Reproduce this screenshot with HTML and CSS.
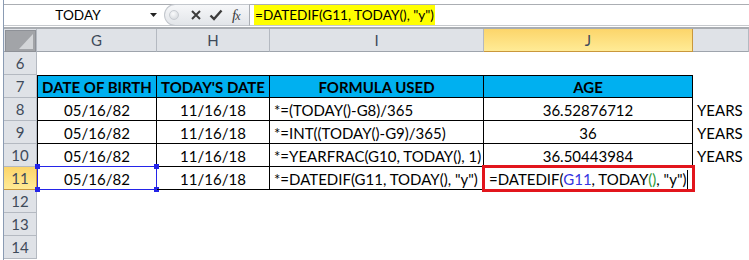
FILE: index.html
```html
<!DOCTYPE html>
<html lang="en">
<head>
    <meta charset="UTF-8">
    <title>DATEDIF</title>
    <link rel="stylesheet" href="styles.css">
</head>
<body>
<div class="app">
    <div class="formula-bar">
        <div class="bar-row">
            <div class="name-box">
                <span class="name">TODAY</span>
                <svg class="drop" width="7" height="4" viewBox="0 0 7 4"><path d="M0 0H7L3.5 4Z" fill="#222"/></svg>
            </div>
            <div class="fx-buttons">
                <span class="knob"></span>
                <svg width="10" height="10" viewBox="0 0 10 10"><path d="M1 1L9 9M9 1L1 9" stroke="#3c3c3c" stroke-width="2"/></svg>
                <svg width="14" height="12" viewBox="0 0 14 12"><path d="M1.5 6.5L5 10L12.5 1.5" stroke="#3c3c3c" stroke-width="2.4" fill="none"/></svg>
                <span class="fx">f<small>x</small></span>
            </div>
            <div class="formula-input">
                <span class="hl">=DATEDIF(G11, TODAY(), "y")</span>
            </div>
        </div>
    </div>

    <div class="sheet">
        <!-- column headings -->
        <div class="hd corner">
            <svg width="31" height="22" viewBox="0 0 31 22"><rect x="0.5" y="0.5" width="30" height="21" fill="#a2a4a8" stroke="#8e9197"/><path d="M28 4V19H14Z" fill="#d3d5d8"/></svg>
        </div>
        <div class="hd">G</div>
        <div class="hd">H</div>
        <div class="hd">I</div>
        <div class="hd active">J</div>
        <div class="hd"></div>

        <!-- row 6 -->
        <div class="rh">6</div>
        <div class="c"></div><div class="c"></div><div class="c"></div><div class="c"></div><div class="c"></div>

        <!-- row 7 -->
        <div class="rh">7</div>
        <div class="c t head first">DATE OF BIRTH</div>
        <div class="c t head">TODAY'S DATE</div>
        <div class="c t head">FORMULA USED</div>
        <div class="c t head">AGE</div>
        <div class="c"></div>

        <!-- row 8 -->
        <div class="rh">8</div>
        <div class="c t first mid">05/16/82</div>
        <div class="c t mid">11/16/18</div>
        <div class="c t">*=(TODAY()-G8)/365</div>
        <div class="c t mid">36.52876712</div>
        <div class="c">YEARS</div>

        <!-- row 9 -->
        <div class="rh">9</div>
        <div class="c t first mid">05/16/82</div>
        <div class="c t mid">11/16/18</div>
        <div class="c t">*=INT((TODAY()-G9)/365)</div>
        <div class="c t mid">36</div>
        <div class="c">YEARS</div>

        <!-- row 10 -->
        <div class="rh">10</div>
        <div class="c t first mid">05/16/82</div>
        <div class="c t mid">11/16/18</div>
        <div class="c t">*=YEARFRAC(G10, TODAY(), 1)</div>
        <div class="c t mid">36.50443984</div>
        <div class="c">YEARS</div>

        <!-- row 11 -->
        <div class="rh active">11</div>
        <div class="c t first mid ref">
            05/16/82
            <span class="sel"></span>
            <span class="grip tl"></span><span class="grip tr"></span>
            <span class="grip bl"></span><span class="grip br"></span>
        </div>
        <div class="c t mid">11/16/18</div>
        <div class="c t">*=DATEDIF(G11, TODAY(), "y")</div>
        <div class="c t editing">=DATEDIF(<span class="blue">G11</span>, TODAY<span class="green">()</span>, "y")<span class="cursor"></span></div>
        <div class="c"></div>

        <div class="rh">12</div>
        <div class="c"></div><div class="c"></div><div class="c"></div><div class="c"></div><div class="c"></div>
        <div class="rh">13</div>
        <div class="c"></div><div class="c"></div><div class="c"></div><div class="c"></div><div class="c"></div>
        <div class="rh">14</div>
        <div class="c"></div><div class="c"></div><div class="c"></div><div class="c"></div><div class="c"></div>
    </div>
</div>
</body>
</html>
```

FILE: styles.css
```css
* {
    box-sizing: border-box;
}
body {
    margin: 0;
    background: #fff;
    font-family: Lato, sans-serif;
    overflow: hidden;
}
.app {
    margin-left: 3px;
    border-left: 1px solid #8a9bb3;
    height: 260px;
}

/* formula bar */
.formula-bar {
    padding-top: 4px;
    padding-bottom: 1px;
    border-bottom: 2px solid #a9adb2;
}
.bar-row {
    display: flex;
    height: 22px;
    border-top: 1px solid #abaeb3;
    border-bottom: 1px solid #c6c9cd;
}
.name-box {
    width: 160px;
    display: flex;
    align-items: center;
    font-size: 13.6px;
    color: #000;
}
.name {
    flex: 1;
    text-align: center;
    padding-left: 2px;
}
.drop {
    margin-right: 7px;
}
.fx-buttons {
    width: 86px;
    display: flex;
    align-items: center;
    gap: 0;
    background: linear-gradient(#f6f7f9, #e2e5e9);
    border: 1px solid #c3c7cd;
    border-right: 1px solid #a9adb3;
    border-radius: 11px 0 0 11px;
    margin-top: -1px;
    margin-bottom: -1px;
}
.knob {
    width: 10px;
    height: 10px;
    border-radius: 50%;
    background: radial-gradient(circle at 40% 35%, #fafbfc, #cfd3d8);
    border: 1px solid #c8ccd1;
    margin-left: 4px;
    margin-right: 12px;
}
.fx-buttons svg + svg {
    margin-left: 8px;
}
.fx {
    margin-left: 9px;
    font-family: "Liberation Serif", serif;
    font-style: italic;
    font-size: 15px;
    color: #3c3c3c;
    letter-spacing: -1px;
}
.fx small {
    font-size: 12px;
}
.formula-input {
    flex: 1;
    padding-left: 4px;
    display: flex;
}
.hl {
    background: #ffff00;
    font-size: 13.6px;
    line-height: 20px;
    padding: 0 1px;
}

/* sheet grid */
.sheet {
    display: grid;
    grid-template-columns: 33px 120px 113px 214px 209px 1fr;
    grid-auto-rows: 23px;
    font-size: 15px;
}
.hd,
.rh {
    background: #dfe2e7;
    color: #3e4a5a;
    border-right: 1px solid #b4b9c1;
    border-bottom: 1px solid #b4b9c1;
    text-align: center;
    line-height: 23px;
    font-size: 15px;
}
.hd {
    border-bottom-color: #9ea4ac;
}
.hd.corner {
    padding: 1px 0 0 1px;
    line-height: 0;
    text-align: left;
}
.hd.active,
.rh.active {
    background: linear-gradient(#fcd56a, #ffeb96);
    border-color: #c9973c;
}
.c {
    position: relative;
    white-space: nowrap;
    line-height: 22px;
    padding: 1px 4px 0;
    color: #000;
}
.t {
    border-right: 1px solid #000;
    border-bottom: 1px solid #000;
}
.t.first {
    border-left: 1px solid #000;
}
.t.head {
    border-top: 1px solid #000;
    background: #00b0f0;
    font-weight: bold;
    text-align: center;
    padding-top: 0;
}
.mid {
    text-align: center;
}

/* reference highlight on G11 */
.sel {
    position: absolute;
    top: -1px;
    left: -1px;
    right: -1px;
    bottom: -1px;
    border: 1px solid #2424e8;
}
.grip {
    position: absolute;
    width: 5px;
    height: 5px;
    background: #2424e8;
}
.grip.tl { top: -3px; left: -3px; }
.grip.tr { top: -3px; right: -3px; }
.grip.bl { bottom: -3px; left: -3px; }
.grip.br { bottom: -3px; right: -3px; }

/* J11 being edited */
.editing {
    outline: 3px solid #e2151c;
    outline-offset: -1px;
    padding-left: 5px;
    z-index: 1;
}
.blue {
    color: #3434e0;
}
.green {
    color: #2e9a38;
}
.cursor {
    display: inline-block;
    width: 1px;
    height: 19px;
    background: #000;
    vertical-align: -4px;
    margin-left: 1px;
}
```
